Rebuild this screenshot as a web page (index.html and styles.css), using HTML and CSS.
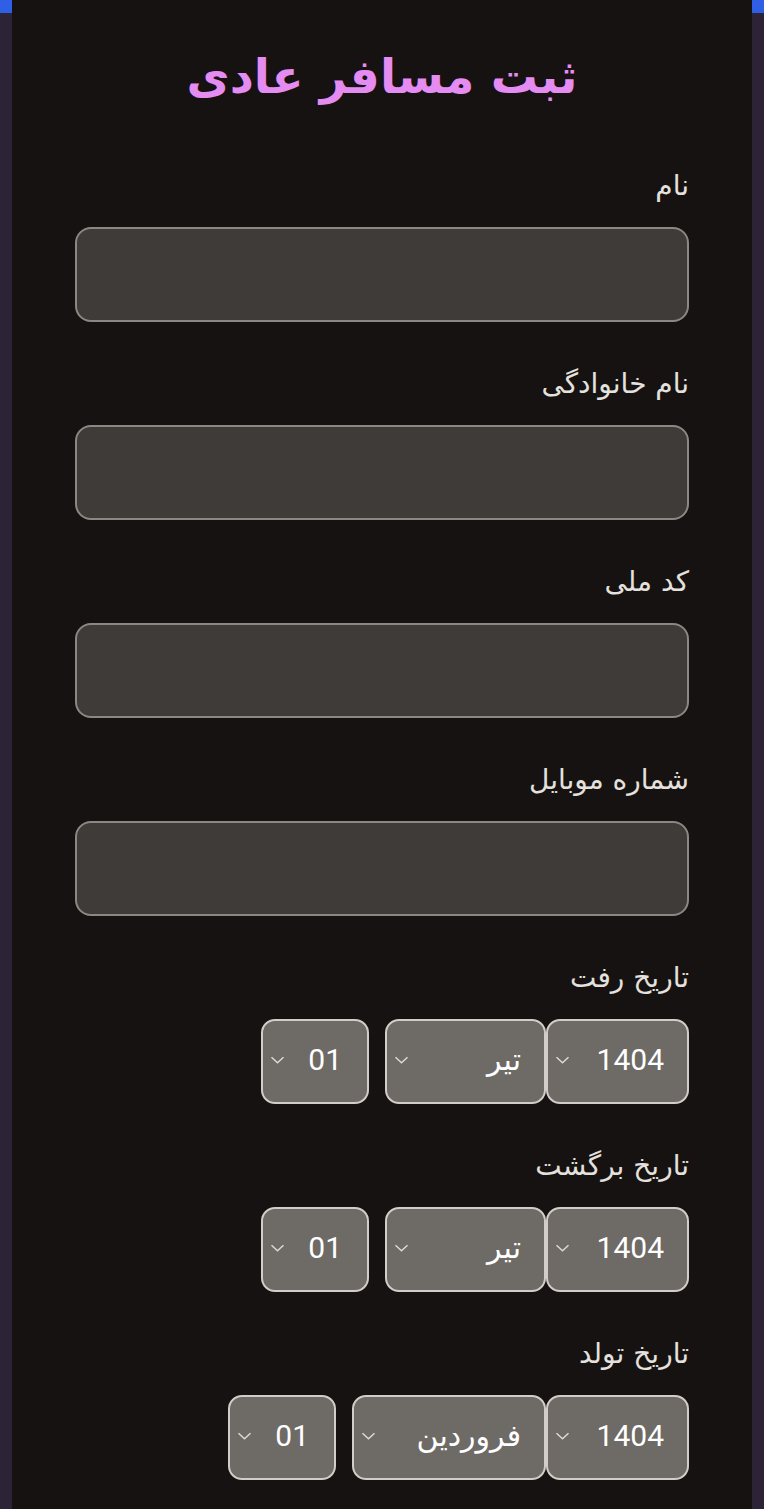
FILE: index.html
```html
<!DOCTYPE html>
<html lang="fa" dir="rtl">
<head>
<meta charset="utf-8">
<title>ثبت مسافر عادی</title>
<link rel="stylesheet" href="styles.css">
</head>
<body>
<div class="frame">
  <div class="strip"><div class="strip-top"></div></div>
  <main class="panel">
    <h1 class="title">ثبت مسافر عادی</h1>
    <form class="form">
      <div class="field">
        <label class="label">نام</label>
        <div class="input"></div>
      </div>
      <div class="field">
        <label class="label">نام خانوادگی</label>
        <div class="input"></div>
      </div>
      <div class="field">
        <label class="label">کد ملی</label>
        <div class="input"></div>
      </div>
      <div class="field">
        <label class="label">شماره موبایل</label>
        <div class="input"></div>
      </div>
      <div class="field">
        <label class="label">تاریخ رفت</label>
        <div class="date-row">
          <div class="select year"><span class="val">1404</span><svg class="chev" viewBox="0 0 14 8"><path d="M1 1.2 L7 6.8 L13 1.2"/></svg></div>
          <div class="select month"><span class="val">تیر</span><svg class="chev" viewBox="0 0 14 8"><path d="M1 1.2 L7 6.8 L13 1.2"/></svg></div>
          <div class="select day"><span class="val">01</span><svg class="chev" viewBox="0 0 14 8"><path d="M1 1.2 L7 6.8 L13 1.2"/></svg></div>
        </div>
      </div>
      <div class="field">
        <label class="label">تاریخ برگشت</label>
        <div class="date-row">
          <div class="select year"><span class="val">1404</span><svg class="chev" viewBox="0 0 14 8"><path d="M1 1.2 L7 6.8 L13 1.2"/></svg></div>
          <div class="select month"><span class="val">تیر</span><svg class="chev" viewBox="0 0 14 8"><path d="M1 1.2 L7 6.8 L13 1.2"/></svg></div>
          <div class="select day"><span class="val">01</span><svg class="chev" viewBox="0 0 14 8"><path d="M1 1.2 L7 6.8 L13 1.2"/></svg></div>
        </div>
      </div>
      <div class="field">
        <label class="label">تاریخ تولد</label>
        <div class="date-row">
          <div class="select year"><span class="val">1404</span><svg class="chev" viewBox="0 0 14 8"><path d="M1 1.2 L7 6.8 L13 1.2"/></svg></div>
          <div class="select month wide"><span class="val">فروردین</span><svg class="chev" viewBox="0 0 14 8"><path d="M1 1.2 L7 6.8 L13 1.2"/></svg></div>
          <div class="select day"><span class="val">01</span><svg class="chev" viewBox="0 0 14 8"><path d="M1 1.2 L7 6.8 L13 1.2"/></svg></div>
        </div>
      </div>
    </form>
  </main>
  <div class="strip"><div class="strip-top"></div></div>
</div>
</body>
</html>
```

FILE: styles.css
```css
html, body {
  margin: 0;
  padding: 0;
  height: 100%;
}
body {
  background: #2b2235;
  font-family: Roboto, "DejaVu Sans", sans-serif;
  overflow: hidden;
}
.frame {
  display: flex;
  width: 764px;
  height: 1509px;
}
.strip {
  width: 12px;
  flex: none;
  background: #2c2337;
}
.strip-top {
  height: 13px;
  background: #2f5fe4;
}
.panel {
  width: 740px;
  flex: none;
  background: #161211;
  padding: 0 63px;
  box-sizing: border-box;
}
.title {
  margin: 0;
  padding-top: 44px;
  height: 126px;
  box-sizing: border-box;
  text-align: center;
  font-family: "DejaVu Sans", sans-serif;
  font-weight: bold;
  font-size: 47px;
  line-height: 66px;
  color: #e48cf1;
}
.form {
  display: flex;
  flex-direction: column;
  gap: 42px;
  padding-top: 40px;
}
.field {
  display: flex;
  flex-direction: column;
}
.label {
  display: block;
  height: 40px;
  line-height: 40px;
  margin-bottom: 21px;
  font-family: "DejaVu Sans", sans-serif;
  font-size: 28px;
  color: #e4e1de;
  text-align: right;
}
.input {
  height: 95px;
  box-sizing: border-box;
  background: #3e3b39;
  border: 2px solid #8c8782;
  border-radius: 16px;
}
.date-row {
  display: flex;
  height: 85px;
}
.select {
  height: 85px;
  box-sizing: border-box;
  background: #6e6a66;
  border: 2px solid #d2cdc8;
  border-radius: 14px;
  display: flex;
  align-items: center;
  justify-content: space-between;
  padding: 0 23px 4px 7px;
  color: #ffffff;
  font-size: 30px;
}
.select .val {
  font-family: Roboto, "DejaVu Sans", sans-serif;
}
.year { width: 143px; }
.month { width: 161px; }
.month.wide { width: 194px; }
.day { width: 108px; margin-right: 16px; padding-right: 25px; }
.chev {
  width: 15px;
  height: 8px;
  flex: none;
}
.chev path {
  fill: none;
  stroke: #dcd8d4;
  stroke-width: 1.5;
}
```
